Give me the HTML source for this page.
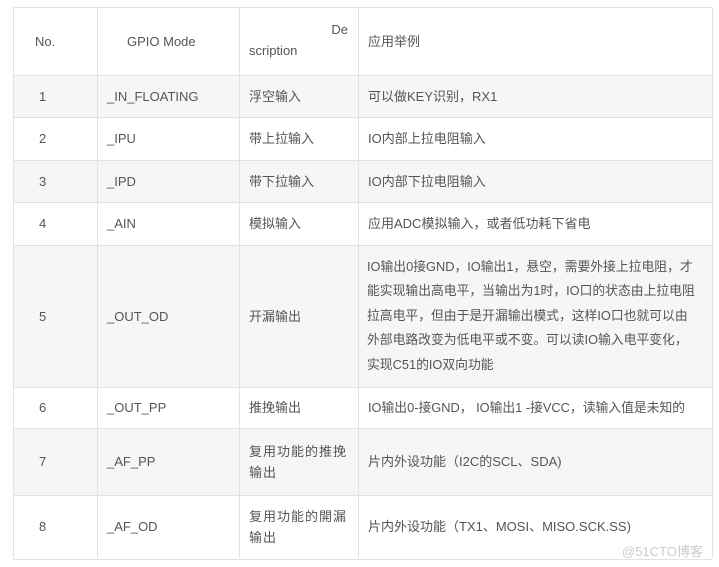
<!DOCTYPE html>
<html><head><meta charset="utf-8"><style>
body{margin:0;width:719px;height:567px;background:#fff;position:relative;overflow:hidden;font-family:"Liberation Sans","Noto Sans CJK SC",sans-serif;font-size:13px;color:#555}
.r{position:absolute;left:13px;width:699px;border-top:1px solid #e2e2e2}
.g{background:#f6f6f6}
.c{position:absolute;display:flex;align-items:center;box-sizing:border-box;padding-left:10px;line-height:21px}
.v{position:absolute;top:7px;height:551px;width:1px;background:#e2e2e2}
</style></head><body>
<div class="r" style="top:7px;height:68px"></div>
<div class="r g" style="top:75px;height:42px"></div>
<div class="r" style="top:117px;height:43px"></div>
<div class="r g" style="top:160px;height:42px"></div>
<div class="r" style="top:202px;height:43px"></div>
<div class="r g" style="top:245px;height:142px"></div>
<div class="r" style="top:387px;height:41px"></div>
<div class="r g" style="top:428px;height:67px"></div>
<div class="r" style="top:495px;height:63px;border-bottom:1px solid #e2e2e2"></div>
<div class="v" style="left:13px"></div><div class="v" style="left:97px"></div><div class="v" style="left:239px"></div><div class="v" style="left:358px"></div><div class="v" style="left:712px"></div>

<div class="c" style="left:13px;top:7px;width:84px;height:68px;padding-left:22px">No.</div>
<div class="c" style="left:97px;top:7px;width:142px;height:68px;padding-left:30px">GPIO Mode</div>
<div class="c" style="left:239px;top:7px;width:119px;height:68px;display:block;padding-top:12px">
<div style="text-align:right;padding-right:10px">De</div><div>scription</div></div>
<div class="c" style="left:358px;top:7px;width:354px;height:68px">应用举例</div>

<div class="c" style="left:13px;top:75px;width:84px;height:42px;padding-left:26px">1</div>
<div class="c" style="left:97px;top:75px;width:142px;height:42px">_IN_FLOATING</div>
<div class="c" style="left:239px;top:75px;width:119px;height:42px">浮空输入</div>
<div class="c" style="left:358px;top:75px;width:354px;height:42px">可以做KEY识别，RX1</div>

<div class="c" style="left:13px;top:117px;width:84px;height:43px;padding-left:26px">2</div>
<div class="c" style="left:97px;top:117px;width:142px;height:43px">_IPU</div>
<div class="c" style="left:239px;top:117px;width:119px;height:43px">带上拉输入</div>
<div class="c" style="left:358px;top:117px;width:354px;height:43px">IO内部上拉电阻输入</div>

<div class="c" style="left:13px;top:160px;width:84px;height:42px;padding-left:26px">3</div>
<div class="c" style="left:97px;top:160px;width:142px;height:42px">_IPD</div>
<div class="c" style="left:239px;top:160px;width:119px;height:42px">带下拉输入</div>
<div class="c" style="left:358px;top:160px;width:354px;height:42px">IO内部下拉电阻输入</div>

<div class="c" style="left:13px;top:202px;width:84px;height:43px;padding-left:26px">4</div>
<div class="c" style="left:97px;top:202px;width:142px;height:43px">_AIN</div>
<div class="c" style="left:239px;top:202px;width:119px;height:43px">模拟输入</div>
<div class="c" style="left:358px;top:202px;width:354px;height:43px">应用ADC模拟输入，或者低功耗下省电</div>

<div class="c" style="left:13px;top:245px;width:84px;height:142px;padding-left:26px">5</div>
<div class="c" style="left:97px;top:245px;width:142px;height:142px">_OUT_OD</div>
<div class="c" style="left:239px;top:245px;width:119px;height:142px">开漏输出</div>
<div class="c" style="left:358px;top:245px;width:354px;height:142px;padding-left:9px;font-size:12.8px;line-height:24.6px;white-space:nowrap">IO输出0接GND，IO输出1，悬空，需要外接上拉电阻，才<br>能实现输出高电平，当输出为1时，IO口的状态由上拉电阻<br>拉高电平，但由于是开漏输出模式，这样IO口也就可以由<br>外部电路改变为低电平或不变。可以读IO输入电平变化，<br>实现C51的IO双向功能</div>

<div class="c" style="left:13px;top:387px;width:84px;height:41px;padding-left:26px">6</div>
<div class="c" style="left:97px;top:387px;width:142px;height:41px">_OUT_PP</div>
<div class="c" style="left:239px;top:387px;width:119px;height:41px">推挽输出</div>
<div class="c" style="left:358px;top:387px;width:354px;height:41px;font-size:12.8px;white-space:nowrap">IO输出0-接GND， IO输出1 -接VCC，读输入值是未知的</div>

<div class="c" style="left:13px;top:428px;width:84px;height:67px;padding-left:26px">7</div>
<div class="c" style="left:97px;top:428px;width:142px;height:67px">_AF_PP</div>
<div class="c" style="left:239px;top:428px;width:119px;height:67px;letter-spacing:1px">复用功能的推挽输出</div>
<div class="c" style="left:358px;top:428px;width:354px;height:67px">片内外设功能（I2C的SCL、SDA)</div>

<div class="c" style="left:13px;top:495px;width:84px;height:63px;padding-left:26px">8</div>
<div class="c" style="left:97px;top:495px;width:142px;height:63px">_AF_OD</div>
<div class="c" style="left:239px;top:495px;width:119px;height:63px;letter-spacing:1px">复用功能的開漏输出</div>
<div class="c" style="left:358px;top:495px;width:354px;height:63px">片内外设功能（TX1、MOSI、MISO.SCK.SS)</div>

<div style="position:absolute;left:622px;top:541px;font-size:13px;color:#ccc">@51CTO博客</div>
</body></html>
